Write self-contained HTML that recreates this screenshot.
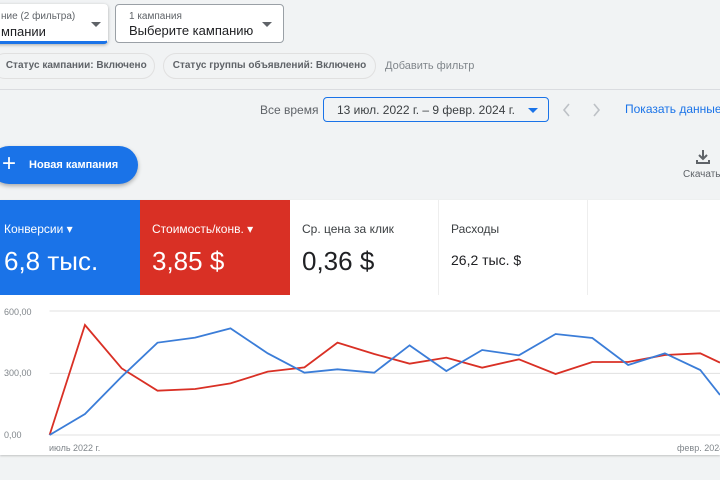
<!DOCTYPE html>
<html><head><meta charset="utf-8"><style>
*{box-sizing:border-box;margin:0;padding:0}
body{width:720px;height:480px;overflow:hidden;background:#f1f3f4;font-family:"Liberation Sans",sans-serif;position:relative;color:#202124}
.a{position:absolute}
.sel{position:absolute;background:#fff;border:1px solid #9aa0a6;border-radius:4px}
.chip{position:absolute;top:53px;height:26px;border:1px solid #e0e0e0;border-radius:13px;font-size:10px;font-weight:bold;color:#5f6368;line-height:24px;text-align:center;white-space:nowrap;overflow:hidden}
.tri{position:absolute;width:0;height:0;border-left:5px solid transparent;border-right:5px solid transparent;border-top:5px solid #5f6368}
.card{position:absolute;top:200px;height:95px}
.lbl{position:absolute;left:12px;top:22px;font-size:12px}
.val{position:absolute;left:12px;top:46px;font-size:26px}
.yl{position:absolute;left:4px;font-size:9px;color:#80868b}
</style></head><body>
<div class="sel" style="left:-10px;top:4px;width:118px;height:40px;border-color:#fff;box-shadow:0 1px 3px rgba(0,0,0,.3);border-bottom:3px solid #1a73e8">
<div class="a" style="left:10px;top:6px;font-size:10px;color:#5f6368">ние (2 фильтра)</div>
<div class="a" style="left:10px;top:19px;font-size:13px">мпании</div>
<div class="tri" style="left:100px;top:17px"></div></div>
<div class="sel" style="left:115px;top:4px;width:169px;height:39px">
<div class="a" style="left:13px;top:6px;font-size:10px;color:#5f6368">1 кампания</div>
<div class="a" style="left:13px;top:18px;font-size:13px">Выберите кампанию</div>
<div class="tri" style="left:146px;top:17px"></div></div>
<div class="chip" style="left:-8px;width:163px">&nbsp;&nbsp;Статус кампании: Включено</div>
<div class="chip" style="left:163px;width:213px">Статус группы объявлений: Включено</div>
<div class="a" style="left:385px;top:60px;font-size:11px;color:#80868b">Добавить фильтр</div>
<div class="a" style="left:0;top:89px;width:720px;height:1px;background:#dadce0"></div>
<div class="a" style="left:260px;top:103px;font-size:12px;color:#5f6368">Все время</div>
<div class="sel" style="left:323px;top:97px;width:226px;height:25px;border-color:#1a73e8;background:transparent">
<div class="a" style="left:13px;top:5px;font-size:12px;color:#3c4043">13 июл. 2022 г. – 9 февр. 2024 г.</div>
<div class="tri" style="left:204px;top:10px;border-top-color:#1a73e8"></div></div>
<svg class="a" style="left:558px;top:100px" width="50" height="20"><path d="M11 4l-5 6 5 6M36 4l5 6-5 6" stroke="#bdc1c6" stroke-width="1.6" fill="none"/></svg>
<div class="a" style="left:625px;top:102px;font-size:12px;color:#1a73e8;white-space:nowrap">Показать данные</div>
<div class="a" style="left:-10px;top:146px;width:148px;height:38px;border-radius:19px;background:#1a73e8;box-shadow:0 2px 4px rgba(0,0,0,.3)">
<div class="a" style="left:12px;top:6px;font-size:24px;color:#fff;line-height:24px">+</div>
<div class="a" style="left:39px;top:13px;font-size:11px;font-weight:bold;color:#fff">Новая кампания</div></div>
<svg class="a" style="left:694px;top:148px" width="18" height="18"><path d="M9 2v9M5 7l4 4 4-4M3 12v3h12v-3" stroke="#5f6368" stroke-width="2" fill="none"/></svg>
<div class="a" style="left:683px;top:169px;font-size:10px;color:#5f6368">Скачать</div>
<div class="a" style="left:0;top:200px;width:720px;height:255px;background:#fff;box-shadow:0 1px 2px rgba(0,0,0,.2)"></div>
<div class="card" style="left:0;width:140px;background:#1a73e8;color:#fff"><div class="lbl" style="left:4px">Конверсии ▾</div><div class="val" style="left:4px">6,8 тыс.</div></div>
<div class="card" style="left:140px;width:150px;background:#d93025;color:#fff"><div class="lbl">Стоимость/конв. ▾</div><div class="val">3,85 $</div></div>
<div class="card" style="left:290px;width:149px;border-right:1px solid #eeeeee"><div class="lbl" style="color:#3c4043">Ср. цена за клик</div><div class="val">0,36 $</div></div>
<div class="card" style="left:439px;width:149px;border-right:1px solid #eeeeee"><div class="lbl" style="color:#3c4043">Расходы</div><div class="val" style="font-size:14px;top:52px">26,2 тыс. $</div></div>
<div class="yl" style="top:307px">600,00</div>
<div class="yl" style="top:368px">300,00</div>
<div class="yl" style="top:430px">0,00</div>
<div class="a" style="left:49px;top:443px;font-size:9px;color:#80868b">июль 2022 г.</div>
<div class="a" style="left:677px;top:443px;font-size:9px;color:#80868b;white-space:nowrap">февр. 2024</div>
<svg class="a" style="left:0;top:290px" width="720" height="190" viewBox="0 0 1568 570" preserveAspectRatio="none">
<path d="M108 63H1568M108 250H1568M108 435H1568" stroke="#e0e0e0" stroke-width="1" vector-effect="non-scaling-stroke"/>
<polyline fill="none" stroke="#d93025" stroke-width="1.8" vector-effect="non-scaling-stroke" points="108,435 185,105 265,235 343,302 425,297 502,280 583,245 663,232 735,158 815,192 892,221 972,203 1050,233 1130,208 1210,252 1290,216 1368,216 1448,195 1525,190 1568,218"/>
<polyline fill="none" stroke="#3b7dd8" stroke-width="1.8" vector-effect="non-scaling-stroke" points="108,435 185,372 265,260 343,158 425,143 502,115 583,190 663,248 735,238 815,248 892,166 972,243 1050,180 1130,196 1210,132 1290,144 1368,225 1448,190 1525,240 1568,315"/>
</svg>
</body></html>
